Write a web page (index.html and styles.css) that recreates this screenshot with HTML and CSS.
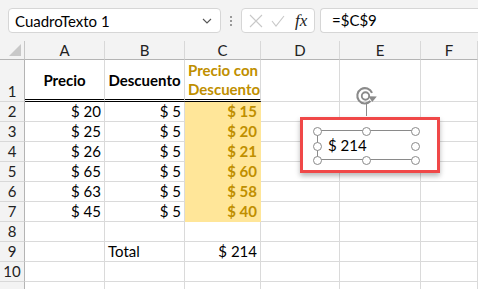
FILE: index.html
```
<!DOCTYPE html>
<html lang="es">
<head>
	<meta charset="UTF-8">
	<title>CuadroTexto</title>
	<link rel="stylesheet" href="styles.css">
</head>
<body>
	<div class="toolbar">
		<div class="namebox">
			<span>CuadroTexto 1</span>
			<svg class="chev" width="10" height="6" viewBox="0 0 10 6"><path d="M1 1l4 4 4-4" fill="none" stroke="#555" stroke-width="1.1"/></svg>
		</div>
		<div class="dots"><i></i><i></i><i></i></div>
		<div class="fxbox">
			<svg width="14" height="14" viewBox="0 0 14 14"><path d="M1 1l12 12M13 1L1 13" stroke="#c8c8c8" stroke-width="1.1"/></svg>
			<svg width="14" height="14" viewBox="0 0 14 14"><path d="M1 7l4 5 8-10" fill="none" stroke="#c8c8c8" stroke-width="1.1"/></svg>
			<span class="fx">fx</span>
		</div>
		<div class="formula">=$C$9</div>
	</div>

	<div class="sheet">
		<div class="corner"></div>
		<div class="colh">A</div><div class="colh">B</div><div class="colh">C</div><div class="colh">D</div><div class="colh">E</div><div class="colh">F</div>

		<div class="rowh top">1</div>
		<div class="cell head mid">Precio</div>
		<div class="cell head mid">Descuento</div>
		<div class="cell head gold">Precio con<br>Descuento</div>
		<div class="cell"></div><div class="cell"></div><div class="cell"></div>

		<div class="rowh">2</div><div class="cell num">$ 20</div><div class="cell num">$ 5</div><div class="cell num fill">$ 15</div><div class="cell"></div><div class="cell"></div><div class="cell"></div>
		<div class="rowh">3</div><div class="cell num">$ 25</div><div class="cell num">$ 5</div><div class="cell num fill">$ 20</div><div class="cell"></div><div class="cell"></div><div class="cell"></div>
		<div class="rowh">4</div><div class="cell num">$ 26</div><div class="cell num">$ 5</div><div class="cell num fill">$ 21</div><div class="cell"></div><div class="cell"></div><div class="cell"></div>
		<div class="rowh">5</div><div class="cell num">$ 65</div><div class="cell num">$ 5</div><div class="cell num fill">$ 60</div><div class="cell"></div><div class="cell"></div><div class="cell"></div>
		<div class="rowh">6</div><div class="cell num">$ 63</div><div class="cell num">$ 5</div><div class="cell num fill">$ 58</div><div class="cell"></div><div class="cell"></div><div class="cell"></div>
		<div class="rowh">7</div><div class="cell num">$ 45</div><div class="cell num">$ 5</div><div class="cell num fill">$ 40</div><div class="cell"></div><div class="cell"></div><div class="cell"></div>
		<div class="rowh">8</div><div class="cell"></div><div class="cell"></div><div class="cell"></div><div class="cell"></div><div class="cell"></div><div class="cell"></div>
		<div class="rowh">9</div><div class="cell"></div><div class="cell">Total</div><div class="cell num">$ 214</div><div class="cell"></div><div class="cell"></div><div class="cell"></div>
		<div class="rowh">10</div><div class="cell"></div><div class="cell"></div><div class="cell"></div><div class="cell"></div><div class="cell"></div><div class="cell"></div>
		<div class="rowh"></div><div class="cell"></div><div class="cell"></div><div class="cell"></div><div class="cell"></div><div class="cell"></div><div class="cell"></div>
	</div>

	<div class="shape">
		<svg class="rotate" width="24" height="20" viewBox="0 0 22 18">
			<path d="M15.6 6.2A7 7 0 1 0 14.2 13.6" fill="none" stroke="#8a8a8a" stroke-width="1.9"/>
			<circle cx="9.6" cy="9" r="3.4" fill="none" stroke="#8a8a8a" stroke-width="1.7"/>
			<path d="M12.4 9.2l7.6 0.2l-4.2 5.2z" fill="#8a8a8a"/>
		</svg>
		<div class="stem"></div>
		<div class="frame">
			<div class="sel">
				<span class="txt">$ 214</span>
				<i class="h tl"></i><i class="h tc"></i><i class="h tr"></i>
				<i class="h ml"></i><i class="h mr"></i>
				<i class="h bl"></i><i class="h bc"></i><i class="h br"></i>
			</div>
		</div>
	</div>
</body>
</html>
```
FILE: styles.css
```
body{margin:0;width:478px;height:289px;overflow:hidden;background:#fff;font-family:"Lato","Noto Sans",sans-serif;font-size:15px;color:#000;position:relative;}

.toolbar{height:41px;background:#f3f3f3;display:flex;align-items:flex-start;padding:8px 0 0 8px;box-sizing:border-box;}
.namebox{width:213px;height:25px;box-sizing:border-box;background:#fff;border:1px solid #d6d6d6;border-radius:4px;display:flex;align-items:center;justify-content:space-between;padding:0 8px 0 6px;font-size:15px;}
.dots{width:20px;height:25px;display:flex;flex-direction:column;align-items:center;justify-content:center;gap:2px;}
.dots i{width:2px;height:2px;background:#999;display:block;}
.fxbox{width:74px;height:25px;box-sizing:border-box;background:#fff;border:1px solid #d6d6d6;border-radius:4px;display:flex;align-items:center;gap:8px;padding:0 0 0 7px;}
.fx{font-family:"Liberation Serif",serif;font-style:italic;font-size:17px;color:#222;margin-left:2px;}
.formula{flex:1;height:25px;box-sizing:border-box;margin-left:5px;background:#fff;border:1px solid #d6d6d6;border-right:0;border-radius:4px 0 0 4px;padding-left:11px;line-height:23px;font-size:15px;}

.sheet{display:grid;grid-template-columns:25px 80px 80px 76px 79px 81px 1fr;grid-template-rows:19px 42px repeat(10,20px);}
.corner,.colh,.rowh{background:#f3f3f3;box-sizing:border-box;color:#222;}
.corner{border-right:1px solid #c6c6c6;border-bottom:1px solid #b4b4b4;position:relative;}
.corner:after{content:"";position:absolute;right:3px;bottom:3px;border-style:solid;border-width:0 0 12px 12px;border-color:transparent transparent #c8c8c8 transparent;}
.colh{border-right:1px solid #d8d8d8;border-bottom:1px solid #b4b4b4;text-align:center;line-height:19px;}
.rowh{border-right:1px solid #b4b4b4;border-bottom:1px solid #d8d8d8;text-align:center;line-height:19px;}
.rowh.top{display:flex;align-items:flex-end;justify-content:center;line-height:20px;}
.cell{box-sizing:border-box;border-right:1px solid #dadada;border-bottom:1px solid #dadada;line-height:19px;padding:0 3px;white-space:nowrap;}
.num{text-align:right;}
.head{font-weight:bold;border-bottom:3px double #000;text-align:center;line-height:19px;}
.mid{display:flex;align-items:center;justify-content:center;padding-top:2px;}
.gold{color:#bf8f00;padding-top:1px;}
.fill{background:#ffe699;border-color:#ffe699;color:#bf8f00;font-weight:bold;}

.shape{position:absolute;left:300px;top:86px;width:140px;}
.rotate{position:absolute;left:55px;top:0;}
.stem{position:absolute;left:66px;top:17px;width:1px;height:13px;background:#8a8a8a;}
.frame{position:absolute;left:0;top:31px;width:140px;height:56px;box-sizing:border-box;border:3px solid #f04848;background:#fff;box-shadow:0 3px 5px rgba(0,0,0,0.28);}
.sel{position:absolute;left:14px;top:10px;width:98px;height:30px;border-top:1px solid #8a8a8a;border-bottom:1px solid #8a8a8a;box-sizing:border-box;}
.sel:before{content:"";position:absolute;left:0;top:0;width:1px;height:100%;background:#8a8a8a;}
.txt{position:absolute;left:11px;top:5px;line-height:18px;font-size:15px;}
.h{position:absolute;width:9px;height:9px;box-sizing:border-box;border:1.5px solid #8a8a8a;border-radius:50%;background:#fff;margin:-4.5px 0 0 -4.5px;}
.tl{left:0;top:0;}.tc{left:49px;top:0;}.tr{left:98px;top:0;}
.ml{left:0;top:15px;}.mr{left:98px;top:15px;}
.bl{left:0;top:29px;}.bc{left:49px;top:29px;}.br{left:98px;top:29px;}
```
